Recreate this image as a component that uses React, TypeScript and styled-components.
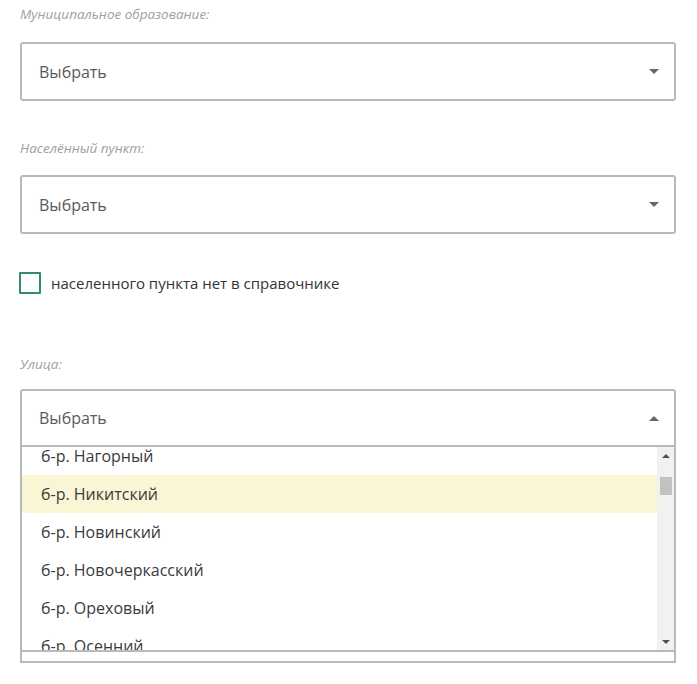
import React, { FunctionComponent } from 'react';
import styled, { createGlobalStyle } from 'styled-components';

const GlobalStyle = createGlobalStyle`
  html, body {
    margin: 0;
    padding: 0;
    background: #fff;
  }

  body {
    font-family: 'Open Sans', 'Liberation Sans', sans-serif;
  }
`;

const Page = styled.div`
  display: flex;
  flex-direction: column;
  padding: 5px 0 0 20px;
  width: 656px;
`;

const Field = styled.div<{ $gap?: number }>`
  display: flex;
  flex-direction: column;
  margin-bottom: ${p => p.$gap ?? 0}px;
`;

const Label = styled.div<{ $space?: number }>`
  height: 18px;
  line-height: 18px;
  font-size: 13.5px;
  font-style: italic;
  color: #a0a0a0;
  margin-bottom: ${p => p.$space ?? 19}px;
`;

const SelectBox = styled.div<{ $open?: boolean }>`
  display: flex;
  align-items: center;
  justify-content: space-between;
  box-sizing: border-box;
  height: ${p => (p.$open ? 58 : 59)}px;
  padding: 0 15px 0 17px;
  border: 2px solid #b9b9b9;
  border-radius: ${p => (p.$open ? '3px 3px 0 0' : '3px')};
  font-size: 16px;
  color: #5a5a5a;
`;

const Caret = styled.span<{ $up?: boolean }>`
  width: 0;
  height: 0;
  border-left: 5px solid transparent;
  border-right: 5px solid transparent;
  ${p => (p.$up ? 'border-bottom: 5px solid #666;' : 'border-top: 5px solid #666;')}
`;

const CheckRow = styled.label`
  display: flex;
  align-items: center;
  gap: 10px;
  margin: 38px 0 61px -1px;
  font-size: 15px;
  color: #333;
`;

const CheckSquare = styled.span`
  box-sizing: border-box;
  width: 22px;
  height: 22px;
  border: 2px solid #2f8a76;
  border-radius: 1px;
`;

const Dropdown = styled.div`
  display: flex;
  flex-direction: column;
  box-sizing: border-box;
  border: 2px solid #b9b9b9;
  border-top: none;
  height: 216px;
`;

const ListArea = styled.div`
  display: flex;
  height: 203px;
  border-bottom: 2px solid #b9b9b9;
  overflow: hidden;
`;

const Options = styled.ul`
  flex: 1;
  list-style: none;
  margin: -10px 0 0;
  padding: 0;
`;

const Option = styled.li<{ $active?: boolean }>`
  height: 38px;
  line-height: 38px;
  padding-left: 19px;
  font-size: 16px;
  color: #3a3a3a;
  background: ${p => (p.$active ? '#faf5d4' : 'transparent')};
  white-space: nowrap;
`;

const Scrollbar = styled.div`
  display: flex;
  flex-direction: column;
  align-items: center;
  width: 17px;
  background: #f1f1f1;
`;

const ScrollArrow = styled.div<{ $down?: boolean }>`
  display: flex;
  align-items: center;
  justify-content: center;
  height: 17px;
  width: 17px;

  &::after {
    content: '';
    border-left: 4px solid transparent;
    border-right: 4px solid transparent;
    ${p => (p.$down ? 'border-top: 4px solid #505050;' : 'border-bottom: 4px solid #505050;')}
  }
`;

const ScrollTrack = styled.div`
  flex: 1;
  width: 100%;
  display: flex;
  justify-content: center;
`;

const ScrollThumb = styled.div`
  width: 12px;
  height: 18px;
  margin-top: 13px;
  background: #c1c1c1;
`;

const streets = [
  'б-р. Нагорный',
  'б-р. Никитский',
  'б-р. Новинский',
  'б-р. Новочеркасский',
  'б-р. Ореховый',
  'б-р. Осенний',
];

const App: FunctionComponent = () => (
  <>
    <GlobalStyle />
    <Page>
      <Field $gap={38}>
        <Label>Муниципальное образование:</Label>
        <SelectBox>
          Выбрать
          <Caret />
        </SelectBox>
      </Field>

      <Field>
        <Label $space={18}>Населённый пункт:</Label>
        <SelectBox>
          Выбрать
          <Caret />
        </SelectBox>
      </Field>

      <CheckRow>
        <CheckSquare />
        населенного пункта нет в справочнике
      </CheckRow>

      <Field>
        <Label $space={16}>Улица:</Label>
        <SelectBox $open>
          Выбрать
          <Caret $up />
        </SelectBox>
        <Dropdown>
          <ListArea>
            <Options>
              {streets.map((s, i) => (
                <Option key={s} $active={i === 1}>
                  {s}
                </Option>
              ))}
            </Options>
            <Scrollbar>
              <ScrollArrow />
              <ScrollTrack>
                <ScrollThumb />
              </ScrollTrack>
              <ScrollArrow $down />
            </Scrollbar>
          </ListArea>
        </Dropdown>
      </Field>
    </Page>
  </>
);

export default App;
